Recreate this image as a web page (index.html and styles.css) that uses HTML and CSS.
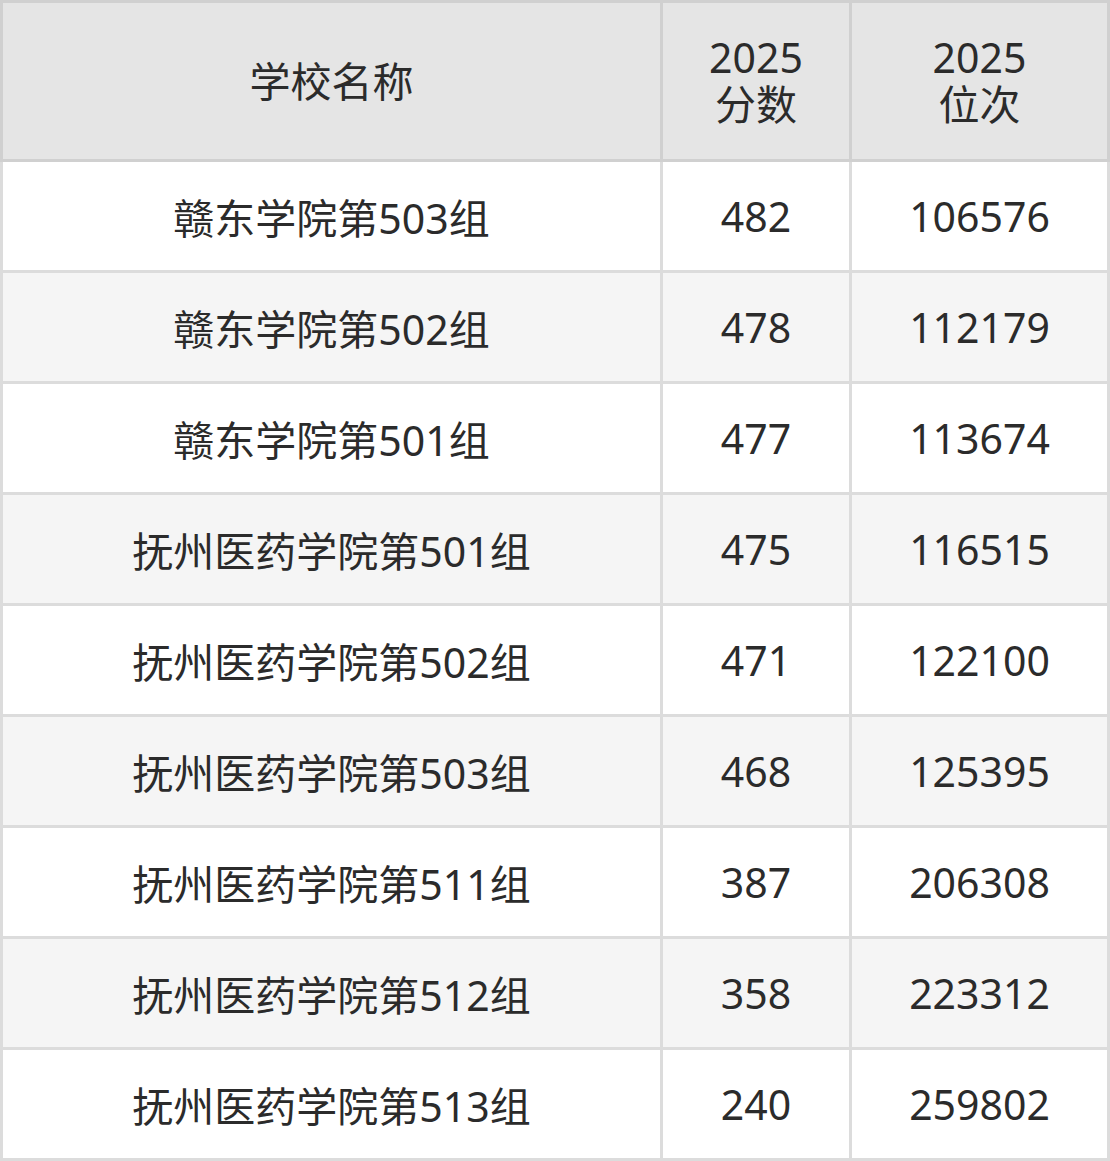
FILE: index.html
```html
<!DOCTYPE html>
<html lang="zh">
<head>
<meta charset="utf-8">
<link rel="stylesheet" href="styles.css">
</head>
<body>
<div class="table">
  <div class="head">
    <div class="cell">学校名称</div>
    <div class="cell">2025<br>分数</div>
    <div class="cell">2025<br>位次</div>
  </div>
  <div class="body">
    <div class="cell">赣东学院第503组</div><div class="cell">482</div><div class="cell">106576</div>
    <div class="cell alt">赣东学院第502组</div><div class="cell alt">478</div><div class="cell alt">112179</div>
    <div class="cell">赣东学院第501组</div><div class="cell">477</div><div class="cell">113674</div>
    <div class="cell alt">抚州医药学院第501组</div><div class="cell alt">475</div><div class="cell alt">116515</div>
    <div class="cell">抚州医药学院第502组</div><div class="cell">471</div><div class="cell">122100</div>
    <div class="cell alt">抚州医药学院第503组</div><div class="cell alt">468</div><div class="cell alt">125395</div>
    <div class="cell">抚州医药学院第511组</div><div class="cell">387</div><div class="cell">206308</div>
    <div class="cell alt">抚州医药学院第512组</div><div class="cell alt">358</div><div class="cell alt">223312</div>
    <div class="cell">抚州医药学院第513组</div><div class="cell">240</div><div class="cell">259802</div>
  </div>
</div>
</body>
</html>
```
FILE: styles.css
```css
html, body {
  margin: 0;
  padding: 0;
  background: #ffffff;
}
.table {
  width: 1110px;
  display: flex;
  flex-direction: column;
  font-family: "Noto Sans", "Noto Sans CJK SC", sans-serif;
  font-size: 41px;
  color: #2b2b2b;
}
.head, .body {
  display: grid;
  grid-template-columns: 657px 186px 1fr;
  gap: 3px;
}
.head {
  background: #d0d0d0;
  padding: 3px;
  grid-template-rows: 156px;
  line-height: 47px;
}
.body {
  background: #dcdcdc;
  padding: 0 3px 3px;
  grid-auto-rows: 108px;
}
.head .cell {
  background: #e5e5e5;
}
.cell {
  background: #ffffff;
  display: flex;
  align-items: center;
  justify-content: center;
  text-align: center;
}
.cell.alt {
  background: #f5f5f5;
}
```
